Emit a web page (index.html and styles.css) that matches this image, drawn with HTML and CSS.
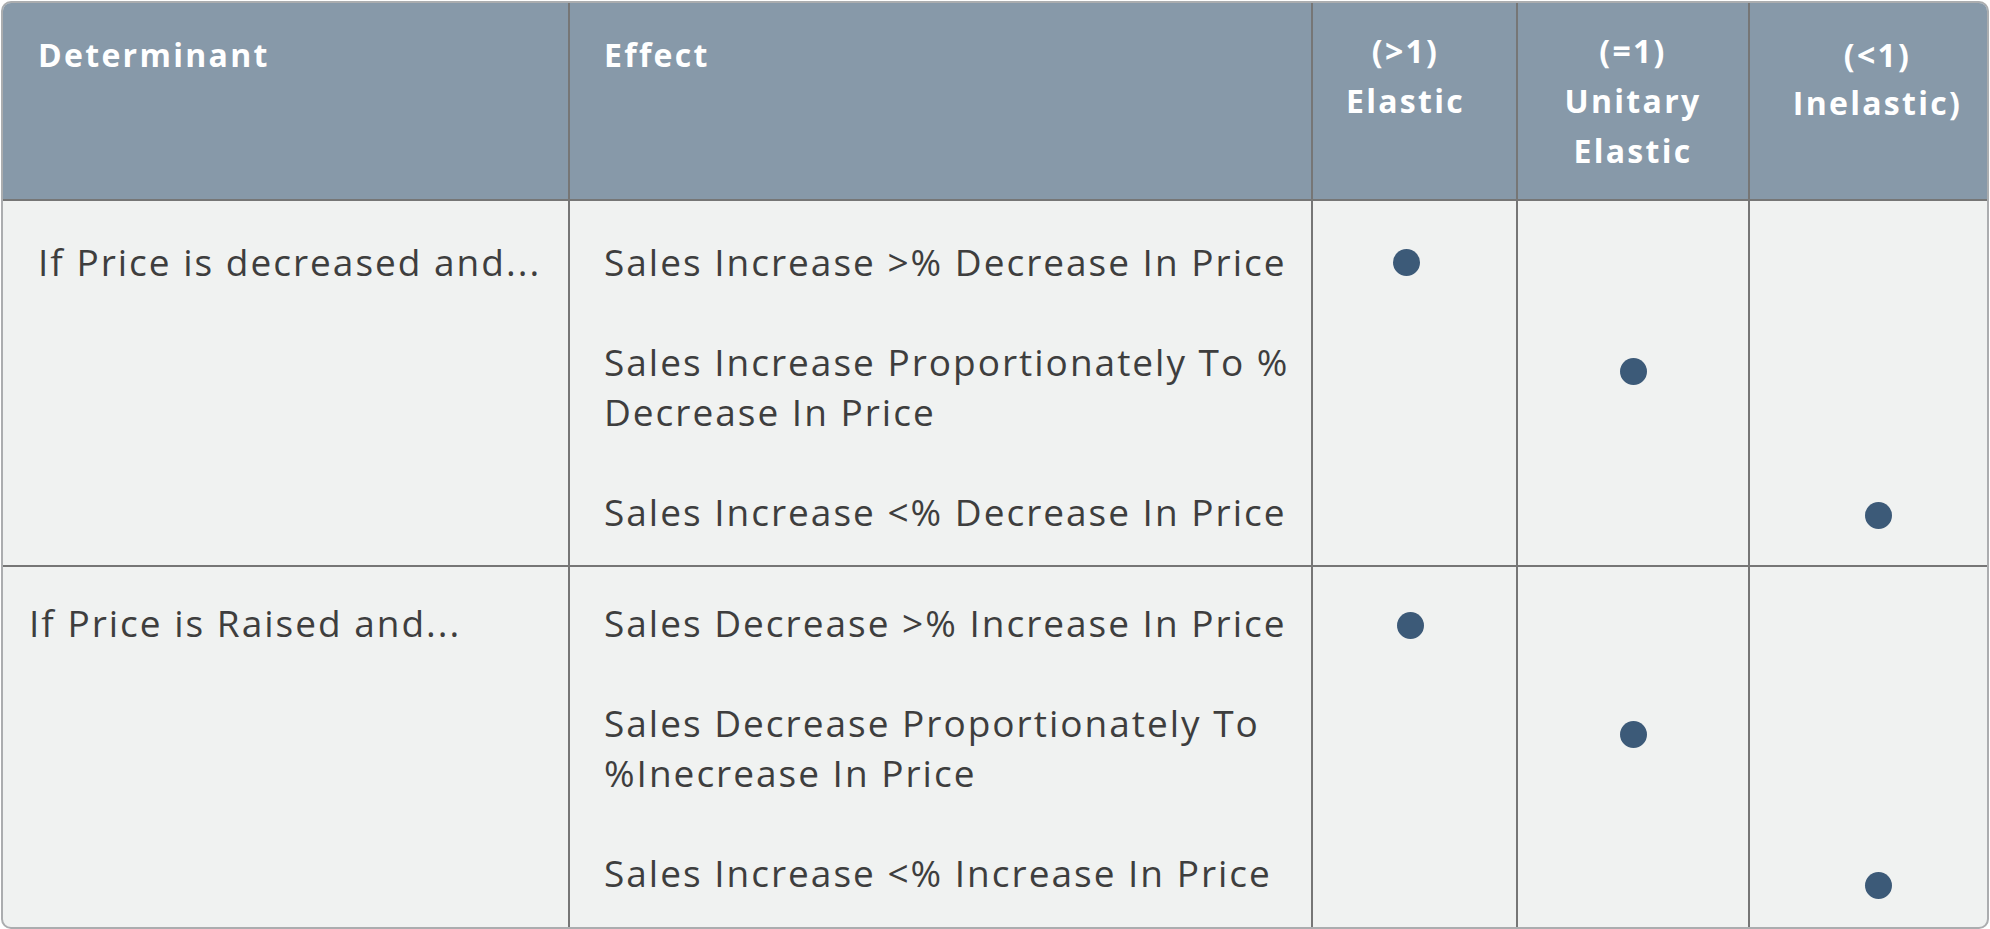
FILE: index.html
```html
<!DOCTYPE html>
<html lang="en">
<head>
<meta charset="utf-8">
<title>Price Elasticity</title>
<link rel="stylesheet" href="styles.css">
</head>
<body>
<div class="table">
  <div class="head cell c1"><span>Determinant</span></div>
  <div class="head cell c2"><span>Effect</span></div>
  <div class="head cell c3 hn"><span>(&gt;1)</span><span>Elastic</span></div>
  <div class="head cell c4 hn"><span>(=1)</span><span>Unitary</span><span>Elastic</span></div>
  <div class="head cell c5"><span>(&lt;1)</span><span>Inelastic)</span></div>

  <div class="body cell c1 r1 det"><p>If Price is decreased and...</p></div>
  <div class="body cell c2 r1 eff">
    <p class="s1">Sales Increase &gt;% Decrease In Price</p>
    <p class="s2">Sales Increase Proportionately To % Decrease In Price</p>
    <p class="s1">Sales Increase &lt;% Decrease In Price</p>
  </div>
  <div class="body cell c3 r1 dots"><i class="slot s1"><b class="dot d11"></b></i><i class="slot s2"></i><i class="slot s1"></i></div>
  <div class="body cell c4 r1 dots"><i class="slot s1"></i><i class="slot s2"><b class="dot d12"></b></i><i class="slot s1"></i></div>
  <div class="body cell c5 r1 dots"><i class="slot s1"></i><i class="slot s2"></i><i class="slot s1"><b class="dot d13"></b></i></div>

  <div class="body cell c1 r2 det det2"><p>If Price is Raised and...</p></div>
  <div class="body cell c2 r2 eff">
    <p class="s1">Sales Decrease &gt;% Increase In Price</p>
    <p class="s2">Sales Decrease Proportionately To %Inecrease In Price</p>
    <p class="s1">Sales Increase &lt;% Increase In Price</p>
  </div>
  <div class="body cell c3 r2 dots"><i class="slot s1"><b class="dot d21"></b></i><i class="slot s2"></i><i class="slot s1"></i></div>
  <div class="body cell c4 r2 dots"><i class="slot s1"></i><i class="slot s2"><b class="dot d22"></b></i><i class="slot s1"></i></div>
  <div class="body cell c5 r2 dots"><i class="slot s1"></i><i class="slot s2"></i><i class="slot s1"><b class="dot d23"></b></i></div>
</div>
</body>
</html>
```

FILE: styles.css
```css
html, body {
  margin: 0;
  padding: 0;
  background: #ffffff;
}

body {
  padding: 1px;
  font-family: "Open Sans", "DejaVu Sans", sans-serif;
}

.table {
  width: 1988px;
  box-sizing: border-box;
  border: 2px solid #abadaf;
  border-radius: 10px;
  overflow: hidden;
  background: #f0f2f1;
  display: grid;
  grid-template-columns: 565px 743px 205px 232px 239px;
  grid-template-rows: 198px 366px 360px;
}

.cell {
  box-sizing: border-box;
  min-width: 0;
}

.c2, .c3, .c4, .c5 {
  border-left: 2px solid #767676;
}

.head {
  background: #8799a9;
  color: #ffffff;
  font-weight: 700;
  font-size: 32px;
  line-height: 48px;
  letter-spacing: 2.3px;
  border-bottom: 2px solid #767676;
  padding-top: 28px;
  display: flex;
  flex-direction: column;
}

.head.c1 { padding-left: 35px; }
.head.c2 { padding-left: 34px; }
.head.c3, .head.c4, .head.c5 { align-items: center; }
.head.hn { padding-top: 23px; line-height: 50px; }

.c3 { padding-right: 18px; }
.c5 { padding-left: 18px; }

.r1 { border-bottom: 2px solid #767676; padding-top: 36px; }
.r2 { padding-top: 31px; }

.body {
  color: #3e3e3e;
  font-size: 37px;
  line-height: 50px;
  letter-spacing: 2px;
}

.body p { margin: 0; }

.det { padding-left: 35px; }
.det2 { padding-left: 26px; }

.eff {
  padding-left: 34px;
  padding-right: 10px;
  display: flex;
  flex-direction: column;
  gap: 50px;
}

.dots {
  display: flex;
  flex-direction: column;
  align-items: center;
  gap: 50px;
}

.slot {
  display: block;
  width: 26px;
}

.slot.s1 { height: 50px; }
.slot.s2 { height: 100px; }

.dot {
  display: block;
  width: 27px;
  height: 27px;
  border-radius: 50%;
  background: #3c5a78;
}

.d11 { margin-top: 12px; }
.d12 { margin-top: 21px; }
.d13 { margin-top: 15px; }
.d21 { margin-top: 14px; margin-left: 4px; }
.d22 { margin-top: 23px; }
.d23 { margin-top: 24px; }
```
